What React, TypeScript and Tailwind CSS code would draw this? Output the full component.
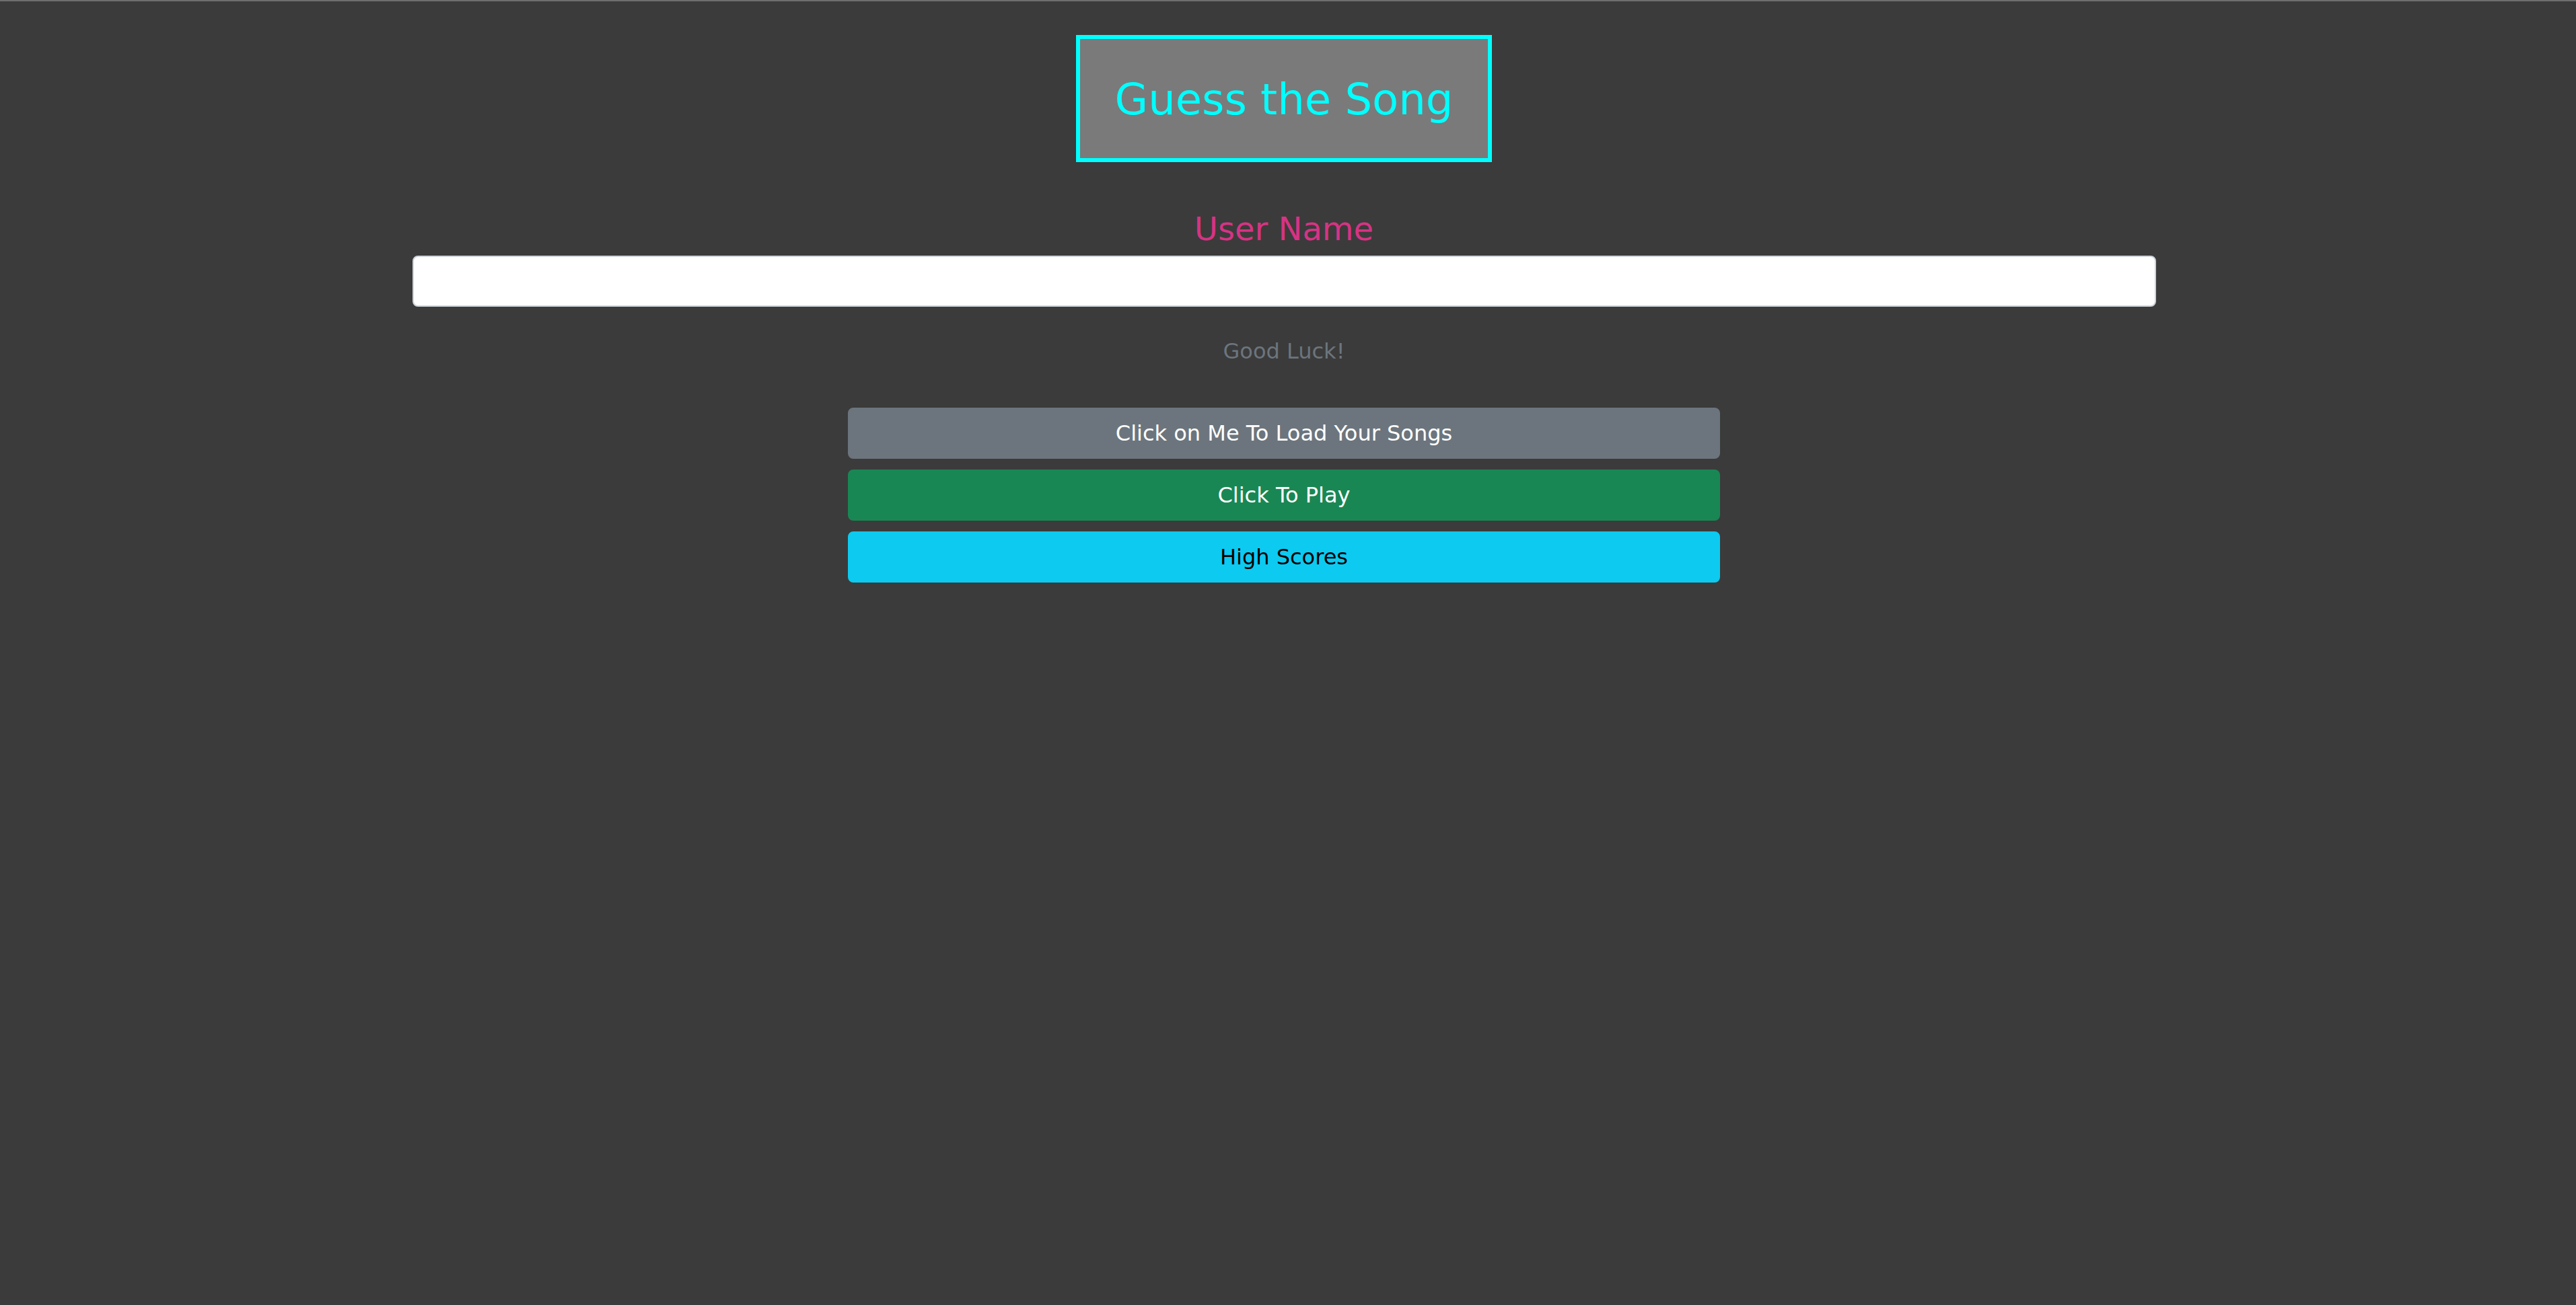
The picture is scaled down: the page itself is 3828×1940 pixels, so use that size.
import React from "react";

const font = { fontFamily: '"DejaVu Sans", Verdana, sans-serif' };

const buttons = [
  { label: "Click on Me To Load Your Songs", cls: "bg-[#6c757d] border-[#6c757d] text-white" },
  { label: "Click To Play", cls: "bg-[#198754] border-[#198754] text-white" },
  { label: "High Scores", cls: "bg-[#0dcaf0] border-[#0dcaf0] text-black" },
];

export default function App() {
  return (
    <div
      className="min-h-[1940px] w-full bg-[#3b3b3b] border-t-2 border-[#6e6e6e] pr-[12px] flex flex-col items-center"
      style={font}
    >
      {/* title */}
      <div className="mt-[50px] w-[618px] h-[189px] border-[6px] border-[#00ffff] bg-[#7a7a7a] flex justify-center pt-[52px]">
        <h1 className="text-[64px] leading-[1.2] text-[#00ffff] font-normal">Guess the Song</h1>
      </div>

      {/* user name */}
      <label htmlFor="user" className="mt-[70px] text-[48px] leading-[58px] text-[#d63384]">
        User Name
      </label>
      <input
        id="user"
        type="text"
        className="mt-[11px] w-[2591px] h-[76px] bg-white border-2 border-[#ced4da] rounded-[8px] px-[24px] text-[32px] text-[#212529] outline-none"
      />

      <p className="mt-[42px] text-[32px] leading-[48px] text-[#6c757d]">Good Luck!</p>

      <div className="mt-[60px] w-[1296px] flex flex-col gap-[16px]">
        {buttons.map((b) => (
          <button
            key={b.label}
            type="button"
            className={`h-[76px] w-full rounded-[8px] border-2 text-[32px] leading-[48px] ${b.cls}`}
          >
            {b.label}
          </button>
        ))}
      </div>
    </div>
  );
}
